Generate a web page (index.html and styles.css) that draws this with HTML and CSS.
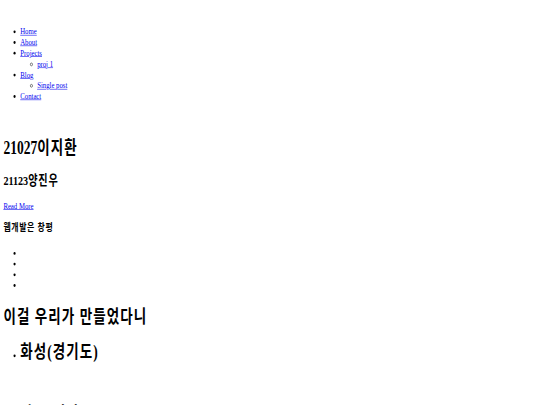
FILE: index.html
```html
<!DOCTYPE html>
<html lang="ko">
<head>
<meta charset="utf-8">
<title>21027이지환</title>
<link rel="stylesheet" href="styles.css">
</head>
<body>
<div class="page">
  <nav>
    <ul class="nav-list">
      <li><a href="#">Home</a></li>
      <li><a href="#">About</a></li>
      <li><a href="#">Projects</a>
        <ul class="sub-list">
          <li><a href="#">proj 1</a></li>
        </ul>
      </li>
      <li><a href="#">Blog</a>
        <ul class="sub-list">
          <li><a href="#">Single post</a></li>
        </ul>
      </li>
      <li><a href="#">Contact</a></li>
    </ul>
  </nav>
  <h1 class="title-main">21027<span class="ko">이지환</span></h1>
  <h2 class="title-sub">21123<span class="ko">양진우</span></h2>
  <p class="more"><a href="#">Read More</a></p>
  <h3 class="caption ko">웹개발은 창평</h3>
  <ul class="empty-list">
    <li></li>
    <li></li>
    <li></li>
    <li></li>
  </ul>
  <h1 class="heading-big ko">이걸 우리가 만들었다니</h1>
  <ul class="region-list">
    <li class="region"><h1 class="region-name ko">화성(경기도)</h1></li>
    <li class="region region-next"><h1 class="region-name ko">하동(경상도)</h1></li>
  </ul>
</div>
</body>
</html>
```
FILE: styles.css
```css
html, body {
  margin: 0;
  padding: 0;
  overflow: hidden;
  background: #ffffff;
}

body {
  font-family: "Liberation Serif", "Noto Sans CJK KR", serif;
  color: #000000;
}

.page {
  width: 1280px;
  height: 720px;
  box-sizing: border-box;
  padding: 46px 8px 0;
  overflow: hidden;
  transform: scale(0.421875, 0.5625);
  transform-origin: 0 0;
}

a {
  color: #0000ee;
  text-decoration: underline;
}

.ko {
  letter-spacing: 0.08em;
}

.nav-list {
  margin: 0;
  padding-left: 40px;
  font-size: 16px;
  line-height: 19.2px;
}

.sub-list {
  margin: 0;
  padding-left: 40px;
  list-style-type: circle;
}

.title-main {
  font-size: 32px;
  line-height: 37px;
  margin: 63.9px 0 0;
}

.title-sub {
  font-size: 24px;
  line-height: 28px;
  margin: 25.6px 0 0;
}

.more {
  font-size: 16px;
  line-height: 19.2px;
  margin: 20.8px 0 0;
}

.caption {
  font-size: 18.72px;
  line-height: 22px;
  margin: 19.3px 0 0;
}

.empty-list {
  margin: 23.8px 0 0;
  padding-left: 40px;
  font-size: 16px;
  line-height: 19px;
}

.empty-list li {
  min-height: 19px;
}

.heading-big {
  font-size: 32px;
  line-height: 37px;
  margin: 30.3px 0 0;
}

.region-list {
  margin: 24.7px 0 0;
  padding-left: 40px;
  font-size: 16px;
}

.region-name {
  font-size: 32px;
  line-height: 37px;
  margin: 0;
}

.region-next {
  margin-top: 72px;
}
```
